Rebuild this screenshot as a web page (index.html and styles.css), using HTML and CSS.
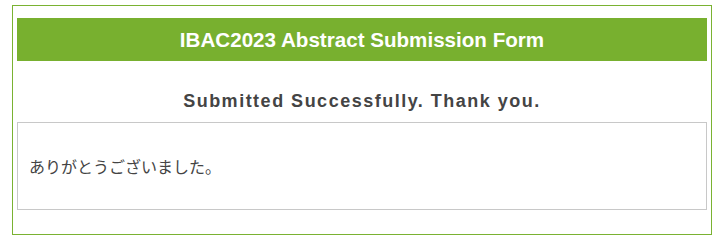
FILE: index.html
```html
<!DOCTYPE html>
<html lang="ja">
<head>
<meta charset="utf-8">
<title>IBAC2023 Abstract Submission Form</title>
<link rel="stylesheet" href="styles.css">
</head>
<body>
<div class="form-wrap">
  <h1 class="form-title">IBAC2023 Abstract Submission Form</h1>
  <h2 class="done-title">Submitted Successfully. Thank you.</h2>
  <div class="done-box">
    <p class="done-text">ありがとうございました。</p>
  </div>
</div>
</body>
</html>
```
FILE: styles.css
```css
html, body {
  margin: 0;
  padding: 0;
  background: #ffffff;
}
body {
  font-family: "Liberation Sans", "Noto Sans CJK JP", sans-serif;
  color: #444444;
}
.form-wrap {
  box-sizing: border-box;
  width: 700px;
  margin: 5px 0 0 12px;
  border: 1px solid #7ab232;
  padding: 12px 4px 24px;
}
.form-title {
  margin: 0;
  height: 43px;
  line-height: 43px;
  background: #78b02f;
  color: #ffffff;
  font-size: 20.6px;
  font-weight: bold;
  text-align: center;
}
.done-title {
  margin: 0;
  padding: 30px 0 11px;
  line-height: 20px;
  font-size: 18px;
  font-weight: bold;
  letter-spacing: 1.5px;
  text-align: center;
  color: #444444;
}
.done-box {
  border: 1px solid #c8c8c8;
  padding: 32px 11px;
}
.done-text {
  margin: 0;
  line-height: 22px;
  font-size: 16px;
  font-family: "Noto Sans CJK JP", sans-serif;
  color: #444444;
}
```
